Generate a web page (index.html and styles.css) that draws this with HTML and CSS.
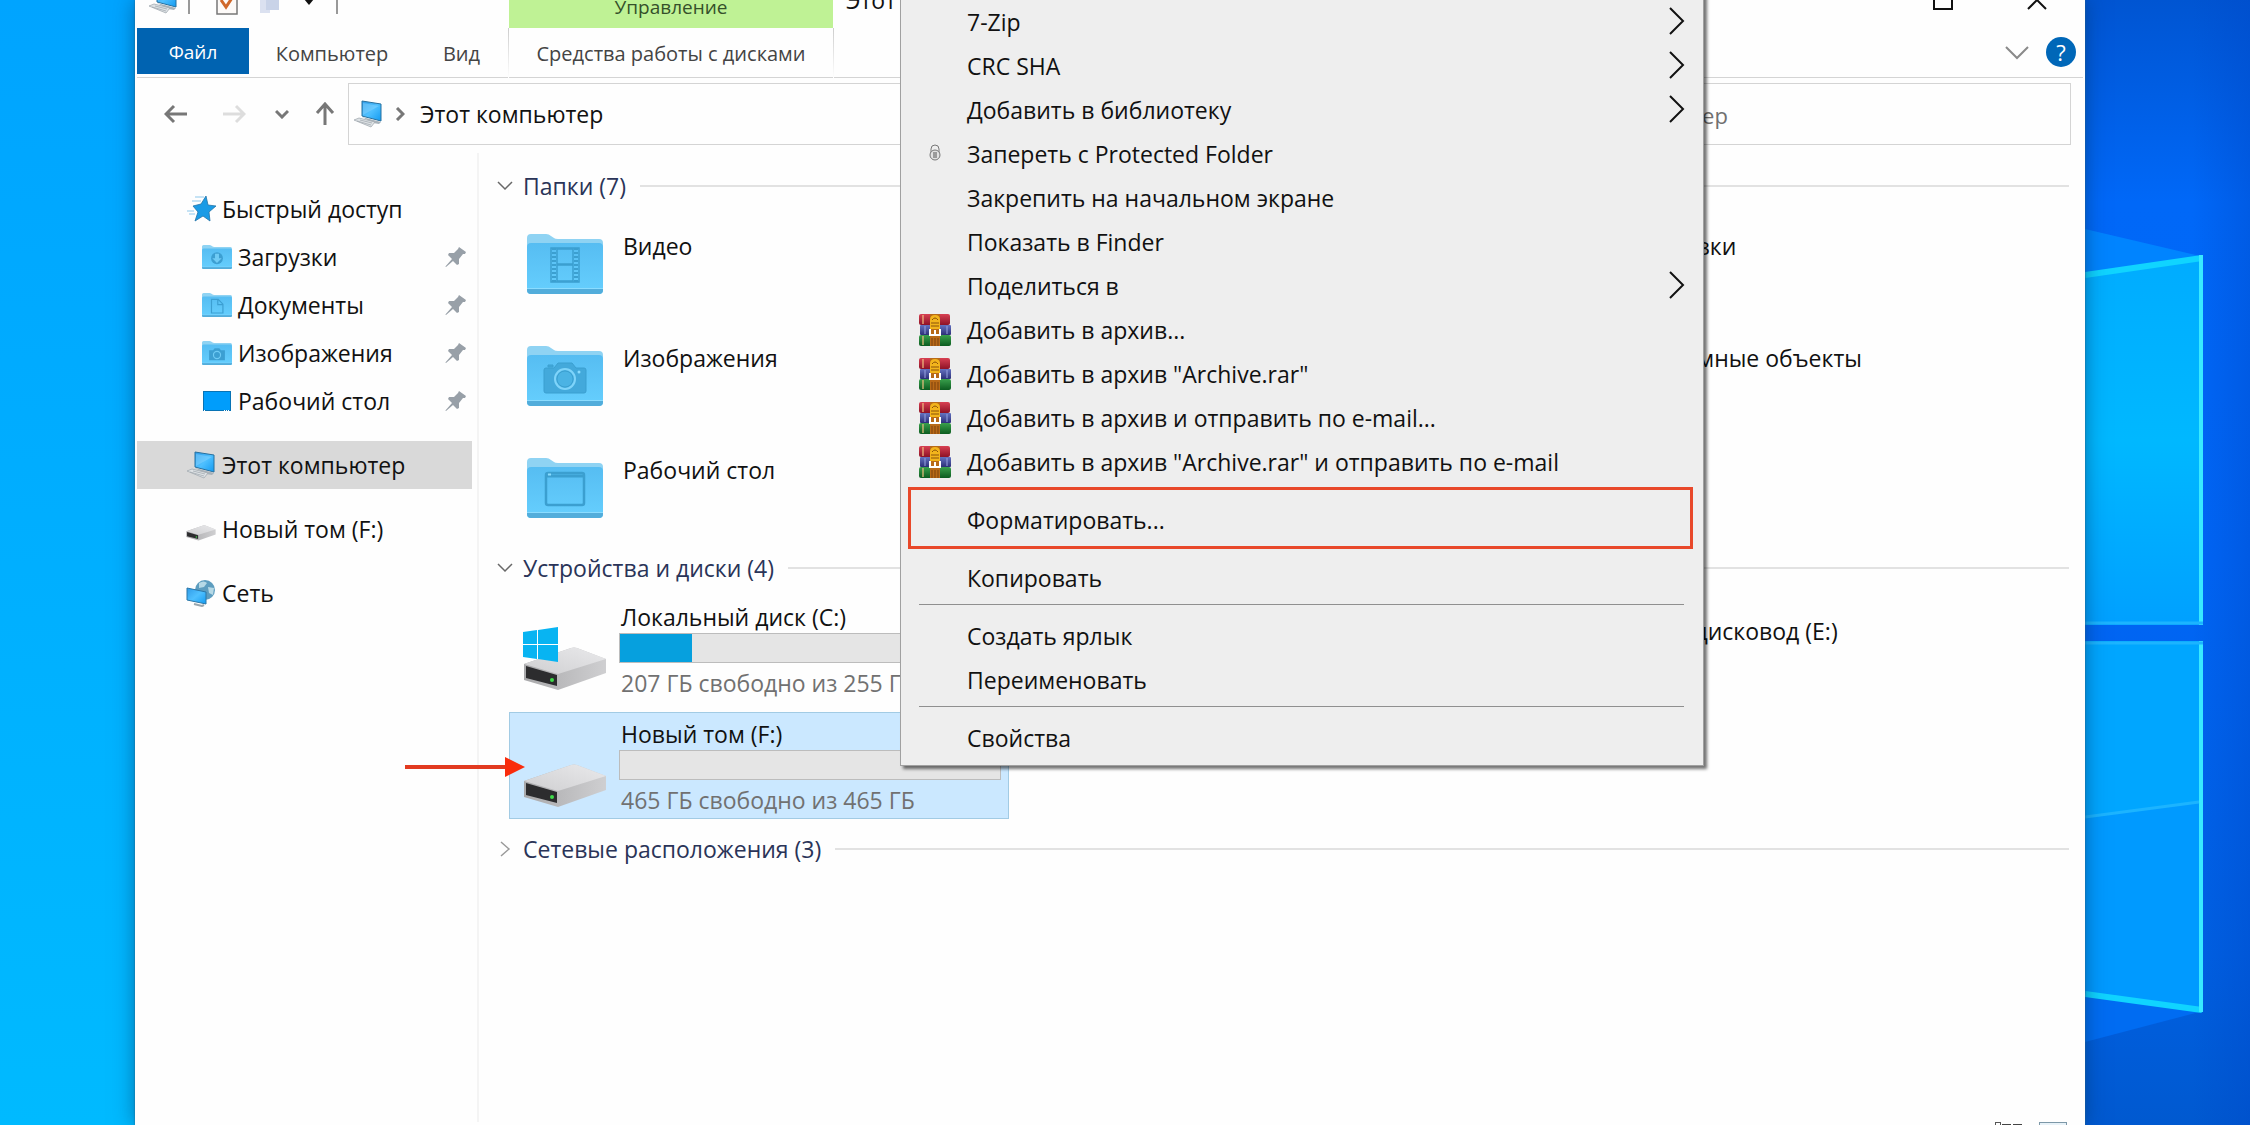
FILE: index.html
```html
<!DOCTYPE html>
<html lang="ru">
<head>
<meta charset="utf-8">
<meta name="viewport" content="width=device-width, initial-scale=1">
<title>Этот компьютер</title>
<link rel="stylesheet" href="styles.css">
</head>
<body>
<svg class="defs" aria-hidden="true">
  <defs>
    <linearGradient id="screen" x1="0" y1="0" x2="1" y2="1"><stop offset="0" stop-color="#2f9be8"/><stop offset=".5" stop-color="#4fc0ff"/><stop offset="1" stop-color="#139af0"/></linearGradient>
    <linearGradient id="folder" x1="0" y1="0" x2="0" y2="1"><stop offset="0" stop-color="#56bdf2"/><stop offset="1" stop-color="#66cffe"/></linearGradient>
    <linearGradient id="metal" x1="0" y1="0" x2="1" y2="0"><stop offset="0" stop-color="#a9a9ab"/><stop offset="1" stop-color="#cfcfd1"/></linearGradient>
    <linearGradient id="lid" x1="0" y1="1" x2="1" y2="0"><stop offset="0" stop-color="#cfcfd1"/><stop offset="1" stop-color="#e9e9eb"/></linearGradient>
    <linearGradient id="book-red" x1="0" y1="0" x2="0" y2="1"><stop offset="0" stop-color="#d84052"/><stop offset="1" stop-color="#8e1226"/></linearGradient>
    <linearGradient id="book-blue" x1="0" y1="0" x2="0" y2="1"><stop offset="0" stop-color="#6472c0"/><stop offset="1" stop-color="#2c2f78"/></linearGradient>
    <linearGradient id="book-green" x1="0" y1="0" x2="0" y2="1"><stop offset="0" stop-color="#3aa04c"/><stop offset="1" stop-color="#0c5c20"/></linearGradient>
  </defs>
  <symbol id="i-pc" viewBox="0 0 30 28">
    <path d="M9 1 28 4v17L9 16z" fill="url(#screen)" stroke="#27709f"/>
    <path d="M10 15V3l16 3z" fill="#8fd6ff" opacity=".45"/>
    <path d="M9 17l19 5-2 2-6-1z" fill="#a9b2b9"/>
    <path d="M1 20l5-2 16 4-4 5z" fill="#dfe3e6" stroke="#a3abb1" stroke-width=".8"/>
    <path d="M4 21l14 4M7 20l12 3" stroke="#a3abb1" stroke-width=".8"/>
  </symbol>
  <symbol id="i-folder" viewBox="0 0 76 60">
    <path d="M0 4q0-4 4-4h15q3 0 5 2l3 2q1 1 4 1h41q4 0 4 4v10H0z" fill="#8fd3f3"/>
    <path d="M0 13q0-4 4-4h68q4 0 4 4v43q0 4-4 4H4q-4 0-4-4z" fill="url(#folder)"/>
    <path d="M0 55h76v1q0 4-4 4H4q-4 0-4-4z" fill="#52addb"/>
    <path d="M0 54.500h76" stroke="#8adcff"/>
  </symbol>
  <symbol id="i-drive" viewBox="0 0 84 44">
    <path d="M1 17 48 1q3-1 6 0l29 11v14L35 43 1 33z" fill="url(#metal)"/>
    <path d="M1 17 48 1q3-1 6 0l29 11-48 15z" fill="url(#lid)"/>
    <path d="M3 19l31 9v11L3 31z" fill="#2c2c2e"/>
    <circle cx="29" cy="33" r="2" fill="#3fdc4a"/>
  </symbol>
  <symbol id="i-pin" viewBox="0 0 22 22">
    <path d="M14 1l7 5-1 2-2 0-4 5 0 5-2 1-4-4-7 6-.6-.6L7 13 3 9l1-2h5l4-4z" fill="#98a0a8"/>
  </symbol>
  <symbol id="i-down" viewBox="0 0 16 10"><path d="M1 1l7 7 7-7" fill="none" stroke="#686868" stroke-width="1.500"/></symbol>
  <symbol id="i-sub" viewBox="0 0 16 28"><path d="M1 1l13 13L1 27" fill="none" stroke="#111" stroke-width="2"/></symbol>
  <symbol id="i-rar" viewBox="0 0 32 32">
    <rect x="0" y="0" width="31" height="11" rx="2" fill="url(#book-red)"/>
    <rect x="1" y="11" width="31" height="10" rx="1" fill="url(#book-blue)"/>
    <rect x="0" y="21" width="32" height="11" rx="2" fill="url(#book-green)"/>
    <path d="M4 1v9M4 22v9" stroke="#f0c080" stroke-width="1.200"/>
    <path d="M6 12v8M28 12v8" stroke="#98a4e0"/>
    <rect x="11" y="0" width="10" height="32" fill="#b86a18"/>
    <path d="M11 6q0-5 5-5t5 5v9H11z" fill="#f2b41c"/>
    <path d="M13 6q3-4 6 0M12 9h8M12 12h8" stroke="#8a5208" fill="none"/>
    <path d="M11 15v6h10v-6M16 16v5" stroke="#fff" stroke-width="2" fill="none"/>
    <path d="M13 24v8M16 24v8M19 24v8" stroke="#7c400c"/>
  </symbol>
</svg>

<div class="desktop">
  <svg class="wallpaper" viewBox="0 0 165 1125" preserveAspectRatio="none" aria-hidden="true">
    <defs>
      <linearGradient id="sky" x1="0" y1="0" x2="0" y2="1"><stop offset="0" stop-color="#0055d2"/><stop offset=".18" stop-color="#0068f8"/><stop offset=".5" stop-color="#0066f6"/><stop offset=".85" stop-color="#0060e2"/><stop offset="1" stop-color="#0059d0"/></linearGradient>
      <linearGradient id="shade" x1="0" y1="0" x2="1" y2="0"><stop offset=".65" stop-color="#0048c8" stop-opacity="0"/><stop offset="1" stop-color="#0048c8" stop-opacity=".4"/></linearGradient>
      <linearGradient id="pane" x1="0" y1="0" x2="0" y2="1"><stop offset="0" stop-color="#00acff"/><stop offset=".5" stop-color="#00b8ff"/><stop offset="1" stop-color="#00a0ff"/></linearGradient>
    </defs>
    <path d="M0 0h165v1125H0z" fill="url(#sky)"/>
    <path d="M0 0h165v1125H0z" fill="url(#shade)"/>
    <path d="M0 229l115 27L0 276z" fill="#0084ff"/>
    <path d="M0 276l118-19v368H0z" fill="url(#pane)"/>
    <path d="M0 641h118v369L0 992z" fill="#009aff"/>
    <path d="M0 641h118v161L0 818z" fill="#00a6ff"/>
    <path d="M0 994l118 17L0 1042z" fill="#006cf2"/>
    <path d="M0 275l117-17M0 994l117 16" stroke="#10d4ff" stroke-width="6"/>
    <path d="M116 255v370M116 641v371" stroke="#38eaff" stroke-width="4"/>
    <path d="M0 623h118M0 643h118M0 817l114-15" stroke="#1cb4ff" stroke-width="3"/>
  </svg>

  <div class="window">
    <header class="titlebar">
      <div class="quick">
        <svg class="q-pc"><use href="#i-pc"/></svg>
        <span class="bar"></span>
        <svg class="q-check" viewBox="0 0 22 30"><rect x="1" y="1" width="20" height="28" fill="#fdfaf8" stroke="#777" stroke-width="1.500"/><path d="M5 15l5 7 8-12" fill="none" stroke="#d0682a" stroke-width="3"/></svg>
        <svg class="q-doc" viewBox="0 0 20 26"><path d="M0 0h10v26H0z" fill="#dbe1f0"/><path d="M6 0h9l4 6v17H6z" fill="#c9d3e8"/></svg>
        <svg class="q-more" viewBox="0 0 10 6"><path d="M0 0h10L5 6z" fill="#111"/></svg>
        <span class="bar"></span>
      </div>
      <div class="context-title">Управление</div>
      <div class="title">Этот</div>
      <div class="caption">
        <button type="button" aria-label="Развернуть"><svg viewBox="0 0 20 20"><path d="M1 1h18v18H1z" fill="none" stroke="#111" stroke-width="2"/></svg></button>
        <button type="button" aria-label="Закрыть"><svg viewBox="0 0 20 20"><path d="M1 1l18 18M19 1L1 19" stroke="#111" stroke-width="2"/></svg></button>
      </div>
    </header>

    <nav class="ribbon">
      <button class="file" type="button">Файл</button>
      <button class="tab tab-pc" type="button">Компьютер</button>
      <button class="tab tab-view" type="button">Вид</button>
      <button class="tab tab-context" type="button">Средства работы с дисками</button>
      <button class="expand" type="button" aria-label="Развернуть ленту"><svg viewBox="0 0 24 14"><path d="M1 1l11 11L23 1" fill="none" stroke="#8a8a8a" stroke-width="2"/></svg></button>
      <button class="help" type="button">?</button>
    </nav>

    <div class="toolbar">
      <button class="nav-arrow" type="button" aria-label="Назад"><svg width="24" height="20" viewBox="0 0 24 20"><path d="M23 10H2M10 2l-8 8 8 8" fill="none" stroke="#777" stroke-width="3"/></svg></button>
      <button class="nav-arrow" type="button" aria-label="Вперёд"><svg width="24" height="20" viewBox="0 0 24 20"><path d="M1 10h21M14 2l8 8-8 8" fill="none" stroke="#ddd" stroke-width="3"/></svg></button>
      <button class="nav-recent" type="button" aria-label="Последние"><svg width="14" height="10" viewBox="0 0 14 10"><path d="M1 2l6 6 6-6" fill="none" stroke="#777" stroke-width="3"/></svg></button>
      <button class="nav-up" type="button" aria-label="Вверх"><svg width="20" height="24" viewBox="0 0 20 24"><path d="M10 23V2M2 11l8-9 8 9" fill="none" stroke="#777" stroke-width="3"/></svg></button>
      <div class="address">
        <svg class="a-pc"><use href="#i-pc"/></svg>
        <svg class="a-sep" viewBox="0 0 10 14"><path d="M2 1l6 6-6 6" fill="none" stroke="#777" stroke-width="3"/></svg>
        <a href="#pc">Этот компьютер</a>
      </div>
      <input class="search" type="search" aria-label="Поиск" placeholder="Поиск: Этот компьютер">
    </div>

    <div class="body">
      <nav class="sidebar">
        <a class="row top" href="#quick"><svg class="s-ico" viewBox="0 0 30 28"><path d="M20 1l2 9 8 1-7 6 1 9-7-5-8 5 3-9-5-6 8-2z" fill="#1a9be6" stroke="#2274a8" stroke-width=".8"/><path d="M9 2h9M6 6h9M3 19h6M1 16h7" stroke="#8ec8ec" stroke-width="1.200"/></svg>Быстрый доступ</a>
        <a class="row" href="#downloads"><svg class="f-ico" viewBox="0 0 76 60" preserveAspectRatio="none"><use href="#i-folder" width="76" height="60"/><circle cx="38" cy="33" r="15" fill="#3c9fd2"/><path d="M33 22h10v11h7L38 45 26 33h7z" fill="#6fcbf5"/></svg>Загрузки<svg class="pin"><use href="#i-pin"/></svg></a>
        <a class="row" href="#documents"><svg class="f-ico" viewBox="0 0 76 60" preserveAspectRatio="none"><use href="#i-folder" width="76" height="60"/><path d="M24 16h17l12 12v22H24zM40 16v13h12" fill="none" stroke="#3c9fd2" stroke-width="3"/></svg>Документы<svg class="pin"><use href="#i-pin"/></svg></a>
        <a class="row" href="#pictures"><svg class="f-ico" viewBox="0 0 76 60" preserveAspectRatio="none"><use href="#i-folder" width="76" height="60"/><path d="M18 23h10l4-5h12l4 5h10v25H18z" fill="#3c9fd2"/><circle cx="38" cy="35" r="9" fill="none" stroke="#6fcbf5" stroke-width="3"/></svg>Изображения<svg class="pin"><use href="#i-pin"/></svg></a>
        <a class="row" href="#desktop"><svg class="f-ico" viewBox="0 0 30 24"><rect x="1.500" y="2.500" width="27" height="19" fill="#009dfb" stroke="#0873b5"/><path d="M2 21.500h1M22 21.500h6" stroke="#fff" stroke-dasharray="1 1"/></svg>Рабочий стол<svg class="pin"><use href="#i-pin"/></svg></a>
        <a class="row top gap current" href="#pc"><svg class="s-ico"><use href="#i-pc"/></svg>Этот компьютер</a>
        <a class="row top gap" href="#f"><svg class="s-ico drive-ico"><use href="#i-drive"/></svg>Новый том (F:)</a>
        <a class="row top gap" href="#network"><svg class="s-ico" viewBox="0 0 30 28"><circle cx="19" cy="11" r="10" fill="#5d9dbf"/><path d="M13 4q5-3 8 0l-3 4-5 1zM22 8l6 1-1 7-4-2z" fill="#b6d9e6"/><path d="M1 9l19 4v12L1 21z" fill="url(#screen)" stroke="#2b77a8"/><path d="M8 25l8 2 2-1" stroke="#9aa6ad" stroke-width="2" fill="none"/></svg>Сеть</a>
      </nav>

      <main class="content">
        <h2 class="group"><svg class="chev"><use href="#i-down"/></svg>Папки (7)</h2>
        <div class="grid folders">
          <a class="tile" href="#video"><svg class="icon" viewBox="0 0 76 60"><use href="#i-folder" width="76" height="60"/><path d="M24 14h28v34H24z" fill="none" stroke="#3b9fd0" stroke-width="1.500"/><path d="M30 15h16v15H30zM30 31h16v16H30z" fill="none" stroke="#3b9fd0" stroke-width="1.500"/><path d="M27 14v34M49 14v34" stroke="#3b9fd0" stroke-width="4" stroke-dasharray="2 2"/></svg><span>Видео</span></a>
          <a class="tile third" href="#downloads"><span>Загрузки</span></a>
          <a class="tile" href="#pictures"><svg class="icon" viewBox="0 0 76 60"><use href="#i-folder" width="76" height="60"/><path d="M17 24q0-2 2-2h8l4-5h14l4 5h8q2 0 2 2v21q0 2-2 2H19q-2 0-2-2zM21 19h5v2h-5z" fill="#43a9db" stroke="#3b9fd0"/><circle cx="38" cy="33" r="10" fill="#4bb3e4" stroke="#7fd4fa" stroke-width="2"/><circle cx="38" cy="33" r="8" fill="none" stroke="#3b9fd0"/><circle cx="52" cy="26" r="1.500" fill="#8adcff"/></svg><span>Изображения</span></a>
          <a class="tile third" href="#objects"><span>Объемные объекты</span></a>
          <a class="tile" href="#desktop"><svg class="icon" viewBox="0 0 76 60"><use href="#i-folder" width="76" height="60"/><rect x="19" y="15" width="38" height="32" rx="2" fill="none" stroke="#3b9fd0" stroke-width="2.500"/><path d="M20 18h36" stroke="#3b9fd0" stroke-width="3"/><path d="M21 16.500h3" stroke="#8adcff" stroke-width="2"/></svg><span>Рабочий стол</span></a>
        </div>

        <h2 class="group"><svg class="chev"><use href="#i-down"/></svg>Устройства и диски (4)</h2>
        <div class="grid drives">
          <a class="drive" href="#c">
            <svg class="disk" viewBox="0 0 84 64"><use href="#i-drive" y="20" width="84" height="44"/><path d="M0 5l14-2v14H0zM15 3l20-3v17H15zM0 18h14v14L0 30zM15 18h20v17l-20-3z" fill="#08b4f2"/></svg>
            <span class="info"><span class="name">Локальный диск (C:)</span><span class="meter"><span class="used" style="width:19%"></span></span><span class="free">207 ГБ свободно из 255 ГБ</span></span>
          </a>
          <a class="drive third" href="#e"><span>DVD-дисковод (E:)</span></a>
          <a class="drive selected" href="#f">
            <svg class="disk" viewBox="0 0 84 64"><use href="#i-drive" y="20" width="84" height="44"/></svg>
            <span class="info"><span class="name">Новый том (F:)</span><span class="meter"></span><span class="free">465 ГБ свободно из 465 ГБ</span></span>
            <svg class="pointer" viewBox="0 0 120 20"><path d="M0 10h104" stroke="#e23a20" stroke-width="4"/><path d="M100 0l20 10-20 10z" fill="#f92c0c"/></svg>
          </a>
        </div>

        <h2 class="group"><svg class="chev closed" viewBox="0 0 16 16"><path d="M4 1l8 7-8 7" fill="none" stroke="#999" stroke-width="1.500"/></svg>Сетевые расположения (3)</h2>
      </main>
    </div>

    <footer class="status">
      <svg viewBox="0 0 28 20"><rect x=".5" y=".5" width="5" height="5" fill="none" stroke="#555"/><path d="M7 2.500h9M18 2.500h9" stroke="#444"/></svg>
      <svg viewBox="0 0 28 20"><rect x=".5" y=".5" width="27" height="19" fill="#e8f2f8" stroke="#7d98a8"/></svg>
    </footer>

    <ul class="menu">
      <li><button type="button">7-Zip<svg class="sub"><use href="#i-sub"/></svg></button></li>
      <li><button type="button">CRC SHA<svg class="sub"><use href="#i-sub"/></svg></button></li>
      <li><button type="button">Добавить в библиотеку<svg class="sub"><use href="#i-sub"/></svg></button></li>
      <li><button type="button"><svg class="m-ico" viewBox="0 0 32 32"><path d="M12 15v-4q0-4 4-4t4 4v4" fill="none" stroke="#777"/><circle cx="16" cy="17" r="5" fill="#e2e2e2" stroke="#777"/><path d="M14 15h4M14 17h4M14 19h4" stroke="#555"/></svg>Запереть с Protected Folder</button></li>
      <li><button type="button">Закрепить на начальном экране</button></li>
      <li><button type="button">Показать в Finder</button></li>
      <li><button type="button">Поделиться в<svg class="sub"><use href="#i-sub"/></svg></button></li>
      <li><button type="button"><svg class="m-ico"><use href="#i-rar"/></svg>Добавить в архив...</button></li>
      <li><button type="button"><svg class="m-ico"><use href="#i-rar"/></svg>Добавить в архив "Archive.rar"</button></li>
      <li><button type="button"><svg class="m-ico"><use href="#i-rar"/></svg>Добавить в архив и отправить по e-mail...</button></li>
      <li><button type="button"><svg class="m-ico"><use href="#i-rar"/></svg>Добавить в архив "Archive.rar" и отправить по e-mail</button></li>
      <li class="marked"><button type="button">Форматировать...</button></li>
      <li><button type="button">Копировать</button></li>
      <li class="rule" role="separator"></li>
      <li><button type="button">Создать ярлык</button></li>
      <li><button type="button">Переименовать</button></li>
      <li class="rule" role="separator"></li>
      <li><button type="button">Свойства</button></li>
    </ul>
  </div>
</div>
</body>
</html>
```
FILE: styles.css
```css
* { box-sizing: border-box; }

body {
  margin: 0;
  font-family: "Open Sans", "Noto Sans", sans-serif;
  font-size: 23px;
  line-height: 32px;
  color: #111;
}

button {
  padding: 0;
  border: 0;
  background: none;
  font: inherit;
  color: inherit;
}

a { color: inherit; text-decoration: none; }
svg { display: block; flex: none; }
.defs { position: absolute; width: 0; height: 0; }

.desktop {
  position: relative;
  min-height: 100vh;
  padding: 0 165px 0 135px;
  background: linear-gradient(#00a4ff, #00b0ff 55%, #00baff);
  overflow: hidden;
}

.wallpaper {
  position: absolute;
  top: 0;
  right: 0;
  width: 165px;
  height: 100%;
}

.window {
  position: relative;
  display: flex;
  flex-direction: column;
  height: 100vh;
  padding: 0 2px;
  background: #fefefe;
  box-shadow: 0 0 2px #24628a, 0 0 20px rgba(0, 50, 90, .5);
}

/* Title bar */
.titlebar {
  display: flex;
  align-items: center;
  flex: none;
  height: 56px;
  margin-top: -28px;
}

.quick {
  display: flex;
  align-items: center;
  width: 372px;
  padding-left: 10px;
}

.q-pc { width: 32px; height: 28px; }
.bar { width: 2px; height: 28px; margin-left: 9px; background: #999; }
.q-check { width: 22px; height: 30px; margin-left: 26px; }
.q-doc { width: 20px; height: 26px; margin-left: 22px; }
.q-more { width: 10px; height: 6px; margin: 4px 13px 0 24px; }

.context-title {
  width: 324px;
  height: 56px;
  padding-top: 19px;
  background: #bff295;
  color: #35502a;
  font-size: 19px;
  text-align: center;
}

.title { flex: 1; padding-left: 13px; }

.caption { display: flex; gap: 74px; padding-right: 36px; }
.caption svg { width: 20px; height: 20px; }

/* Ribbon */
.ribbon {
  display: flex;
  flex: none;
  height: 50px;
  border-bottom: 1px solid #d4d4d4;
  font-size: 20px;
  color: #444;
}

.ribbon .file {
  width: 112px;
  height: 46px;
  padding-top: 2px;
  background: #0063b1;
  color: #fff;
  font-size: 19px;
}
.tab { height: 50px; padding-top: 2px; }
.tab-pc { width: 166px; }
.tab-view { width: 93px; }
.ribbon .tab-context {
  width: 326px;
  border: 1px solid;
  border-width: 0 1px;
  border-image: linear-gradient(#ccc, #fff) 1;
}
.expand { width: 24px; height: 50px; margin: 0 17px 0 auto; }
.ribbon .help {
  width: 30px;
  height: 30px;
  margin: 9px 7px 0 0;
  border-radius: 50%;
  background: #0067b8;
  color: #fff;
  font-size: 22px;
  line-height: 30px;
}

/* Toolbar */
.toolbar {
  display: flex;
  flex: none;
  height: 67px;
  padding: 5px 12px 0 10px;
}

.toolbar button { display: grid; place-items: center; }
.nav-arrow { width: 58px; }
.nav-recent { width: 38px; }
.nav-up { width: 47px; }

.address {
  display: flex;
  align-items: center;
  width: 1070px;
  border: 1px solid #d4d4d4;
}
.a-pc { width: 34px; height: 28px; margin-left: 2px; }
.a-sep { width: 10px; height: 14px; margin: 0 15px 0 10px; }

.search {
  flex: 1;
  min-width: 0;
  margin-left: 14px;
  padding: 2px 0 0 43px;
  border: 1px solid #d4d4d4;
  background: none;
  font: inherit;
  font-size: 22px;
}
.search::placeholder { color: #707070; opacity: 1; }

/* Body */
.body { display: flex; flex: 1; min-height: 0; }

.sidebar {
  flex: none;
  width: 342px;
  margin-top: 8px;
  padding: 32px 5px 0 0;
  border-right: 2px solid #f4f4f4;
}

.row {
  display: flex;
  align-items: center;
  gap: 6px;
  height: 48px;
  padding: 0 5px 0 65px;
}
.row.top { padding-left: 49px; }
.row.gap { margin-top: 16px; }
.current { background: #d9d9d9; }
.s-ico { width: 30px; height: 28px; }
.drive-ico { height: 24px; margin-top: 8px; }
.f-ico { width: 30px; height: 24px; }
.pin { width: 22px; height: 22px; margin-left: auto; }

.content { flex: 1; min-width: 0; padding: 19px 14px 0 18px; }

.group {
  display: flex;
  align-items: center;
  gap: 10px;
  height: 44px;
  margin: 0;
  font-size: 23px;
  font-weight: 400;
  color: #2a3458;
}
.group::after { content: ""; flex: 1; height: 2px; margin-left: 4px; background: #e2e2e2; }
.chev { width: 16px; height: 10px; }
.chev.closed { height: 16px; }

.grid { display: grid; grid-template-columns: repeat(3, 500px); column-gap: 8px; margin-left: 12px; }
.third { grid-column: 3; }

.folders { grid-auto-rows: 112px; padding-top: 2px; }
.tile { display: flex; gap: 20px; padding: 20px 0 0 18px; }
.icon { width: 76px; height: 60px; margin-top: 4px; }
.tile.third { padding-left: 112px; }

.drives { grid-auto-rows: 107px; row-gap: 10px; padding: 5px 0 8px; }
.drive { position: relative; display: flex; gap: 12px; padding: 6px 8px 0 14px; }
.disk { width: 84px; height: 64px; margin-top: 26px; }
.selected { background: #cbe8ff; box-shadow: inset 0 0 0 1px #a2cbe4; }
.info { display: flex; flex: 1; flex-direction: column; }
.name, .free { padding-left: 2px; }
.meter { height: 30px; border: 1px solid #bcbcbc; background: #e5e5e5; }
.used { display: block; height: 28px; background: #06a0de; }
.free { margin-top: 4px; color: #717171; }
.drive.third { padding: 20px 0 0 115px; }

.pointer { position: absolute; top: 45px; left: -104px; width: 120px; height: 20px; }

.status {
  display: flex;
  flex: none;
  gap: 16px;
  height: 3px;
  padding-right: 16px;
  justify-content: flex-end;
  overflow: hidden;
}
.status svg { width: 28px; height: 20px; }

/* Context menu */
.menu {
  position: absolute;
  top: -6px;
  left: 765px;
  width: 804px;
  margin: 0;
  padding: 5px 0;
  list-style: none;
  background: #eee;
  border: 1px solid #a0a0a0;
  box-shadow: 3px 3px 3px rgba(0, 0, 0, .55);
}

.menu button {
  display: grid;
  grid-template-columns: 32px 1fr 16px;
  column-gap: 16px;
  align-items: center;
  width: 100%;
  height: 44px;
  padding: 0 18px;
  text-align: left;
  white-space: nowrap;
}
.menu button::before { content: ""; }
.menu button:has(.m-ico)::before { content: none; }
.m-ico { width: 32px; height: 32px; }
.sub { width: 16px; height: 28px; margin-bottom: 2px; }
.rule { height: 1px; margin: 4px 19px 9px 18px; background: #8f8f8f; }

.marked { height: 62px; margin: 3px 10px 7px 7px; padding-top: 8px; border: 3px solid #e8482a; }
.marked button { padding: 0 8px; }
```
